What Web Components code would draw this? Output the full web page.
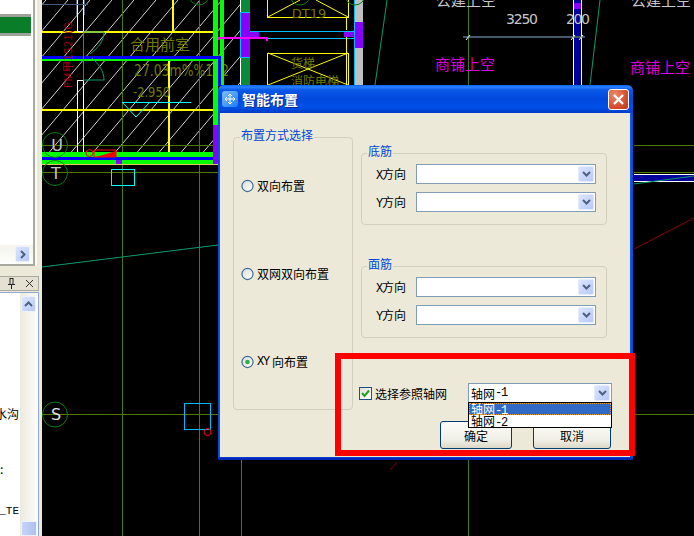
<!DOCTYPE html>
<html lang="en">

<head>
  <meta charset="UTF-8">
  <title>智能布置</title>
  <style>
    html,
    body {
      margin: 0;
      height: 100%;
      background: #000;
      overflow: hidden;
    }

    body {
      font: 12px "Noto Sans CJK SC", sans-serif;
      color: #000;
    }

    /* latin letters of the old bitmap font are 6px wide */
    .l {
      font: 12px "Liberation Mono", monospace;
      letter-spacing: -1.2px;
    }

    #desktop {
      position: relative;
      display: flex;
      width: 694px;
      height: 536px;
    }
  </style>
</head>

<body>
  <div id="desktop">
    <side-panels></side-panels>
    <cad-view></cad-view>

    <smart-dialog caption="智能布置">
      <group-box label="布置方式选择" class="modes">
        <radio-opt>双向布置</radio-opt>
        <radio-opt>双网双向布置</radio-opt>
        <radio-opt checked><span class="l">XY</span>向布置</radio-opt>
      </group-box>

      <group-box label="底筋" class="bars">
        <combo-field><span class="l">X</span>方向</combo-field>
        <combo-field><span class="l">Y</span>方向</combo-field>
      </group-box>

      <group-box label="面筋" class="bars">
        <combo-field><span class="l">X</span>方向</combo-field>
        <combo-field><span class="l">Y</span>方向</combo-field>
      </group-box>

      <check-opt slot="refer" checked>选择参照轴网</check-opt>
      <combo-box slot="refer" open>
        轴网<span class="l">-1</span>
        <list-opt slot="list" selected>轴网<span class="l">-1</span></list-opt>
        <list-opt slot="list">轴网<span class="l">-2</span></list-opt>
      </combo-box>

      <push-btn slot="actions" style="width:72px">确定</push-btn>
      <push-btn slot="actions" style="width:78px">取消</push-btn>
    </smart-dialog>
  </div>

  <script>
    const CHEVRON = `<svg width="9" height="6" viewBox="0 0 9 6"><path d="M1 1l3.5 3.5L8 1" fill="none" stroke="#4d6185" stroke-width="2"/></svg>`;
    const CHEVRON_UP = `<svg width="9" height="6" viewBox="0 0 9 6"><path d="M1 5l3.5-3.5L8 5" fill="none" stroke="#4d6185" stroke-width="2"/></svg>`;

    // the two docked tool windows left of the drawing
    class SidePanels extends HTMLElement {
      constructor() {
        super();
        this.attachShadow({ mode: 'open' });
        this.shadowRoot.innerHTML = `
          <style>
            :host {
              display: flex;
              flex-direction: column;
              flex: none;
              width: 42px;
              height: 536px;
              background: #ece9d8;
            }
            .top {
              position: relative;
              box-sizing: border-box;
              width: 35px;
              height: 266px;
              background: #fff;
              border-right: 2px solid #a9a9a0;
              border-bottom: 2px solid #a9a9a0;
              box-shadow: 2px 0 0 #fbfaf5;
              padding-top: 14px;
            }
            .bar {
              width: 31px;
              height: 16px;
              background: #0a7d28;
              border-top: 3px solid #a0a09a;
              border-bottom: 3px solid #a0a09a;
            }
            .hscroll {
              position: absolute;
              left: 0;
              right: 0;
              bottom: 1px;
              height: 18px;
              padding-right: 3px;
              background: linear-gradient(#f4f3ec, #fdfdfb);
              display: flex;
              justify-content: flex-end;
            }
            .arrow {
              box-sizing: border-box;
              width: 15px;
              height: 16px;
              margin: 1px 0;
              background: linear-gradient(135deg, #dbe5fd, #b7c9f6);
              border: 1px solid #eef2fe;
              border-radius: 2px;
              display: flex;
              align-items: center;
              justify-content: center;
            }
            .head {
              box-sizing: border-box;
              margin-top: 10px;
              width: 39px;
              height: 15px;
              background: #e4e1d2;
              border: 1px solid #a9a9a0;
              border-left: 0;
              display: flex;
              justify-content: flex-end;
              align-items: center;
              gap: 9px;
              padding-right: 4px;
            }
            .list {
              box-sizing: border-box;
              flex: 1;
              margin-top: 1px;
              width: 39px;
              display: flex;
              background: #fff;
              border-right: 1px solid #8fa9cf;
              border-top: 1px solid #8fa9cf;
              overflow: hidden;
            }
            .rows {
              position: relative;
              width: 20px;
              flex: none;
              overflow: hidden;
              white-space: nowrap;
            }
            .rows span {
              position: absolute;
              right: 1px;
              line-height: 14px;
            }
            .rows .mono {
              font: 11px "Liberation Mono", monospace;
            }
            .rows .colon {
              left: 0;
              right: auto;
            }
            .vscroll {
              flex: 1;
              display: flex;
              flex-direction: column;
              justify-content: space-between;
              background: linear-gradient(90deg, #ece9dd, #fdfdfb);
              padding: 2px 1px 0 1px;
            }
            .thumb {
              height: 15px;
              background: linear-gradient(90deg, #c6d4fa, #aebff0);
              border: 1px solid #eef2fe;
              box-sizing: border-box;
            }
          </style>
          <div class="top">
            <div class="bar"></div>
            <div class="hscroll">
              <div class="arrow"><svg width="6" height="9" viewBox="0 0 6 9"><path d="M1 1l3.5 3.5L1 8" fill="none" stroke="#4d6185" stroke-width="2"/></svg></div>
            </div>
          </div>
          <div class="head">
            <svg width="9" height="11" viewBox="0 0 9 11"><path d="M2.500 .5h4M3 1v5M6 1v5M1 6.500h7M4.500 7v4" fill="none" stroke="#222"/></svg>
            <svg width="9" height="9" viewBox="0 0 9 9"><path d="M1 1l7 7M8 1L1 8" stroke="#333"/></svg>
          </div>
          <div class="list">
            <div class="rows">
              <span style="top:114px">水沟</span>
              <span class="colon" style="top:169px">:</span>
              <span class="mono" style="top:212px">_TE</span>
            </div>
            <div class="vscroll">
              <div class="arrow">${CHEVRON_UP}</div>
              <div class="thumb"></div>
            </div>
          </div>
        `;
      }
    }

    // the drawing itself: free canvas, viewBox keeps page coordinates
    class CadView extends HTMLElement {
      constructor() {
        super();
        this.attachShadow({ mode: 'open' });
        this.shadowRoot.innerHTML = `
          <style>
            :host {
              display: block;
              flex: 1;
              height: 536px;
              background: #000;
            }
            svg {
              display: block;
            }
            text {
              font-family: "Noto Sans CJK SC", sans-serif;
            }
            text.num {
              font-family: "DejaVu Sans", sans-serif;
            }
          </style>
          <svg width="652" height="536" viewBox="42 0 652 536">
            <defs>
              <pattern id="hatch" x="2" width="22" height="26" patternUnits="userSpaceOnUse">
                <path d="M-1 27.200L23 -1.200" stroke="#d0d0d0" stroke-width="1"/>
              </pattern>
            </defs>
            <path d="M42 0H240V85H218V153H42Z" fill="url(#hatch)"/>

            <!-- sits under the green band, which hides one digit -->
            <text x="134" y="76" font-size="15" fill="#707a00" class="num" textLength="95" lengthAdjust="spacingAndGlyphs">27.03m%%152</text>

            <g shape-rendering="crispEdges">
              <!-- grid axes -->
              <path d="M122.500 0V536M199.500 0V536M241.500 460V536M468.500 0V85M468.500 458V536M42 145.500H218M42 172.500H218M42 414.500H218M634 145.500H694M634 172.500H694M634 414.500H694" stroke="#4a7a00" fill="none"/>

              <!-- yellow walls -->
              <rect x="42" y="31" width="176" height="2" fill="#ff0"/>
              <rect x="42" y="109" width="172" height="2" fill="#ff0"/>
              <rect x="172" y="0" width="2" height="33" fill="#ff0"/>
              <rect x="168" y="60" width="2" height="97" fill="#ff0"/>
              <rect x="42" y="164" width="176" height="1" fill="#e8c860"/>

              <!-- white door jambs -->
              <rect x="77" y="0" width="1" height="32" fill="#fff"/>
              <rect x="83" y="0" width="1" height="32" fill="#fff"/>
              <rect x="77" y="80" width="1" height="77" fill="#fff"/>
              <rect x="83" y="80" width="1" height="77" fill="#fff"/>
              <rect x="78" y="80" width="5" height="1" fill="#fff"/>
              <rect x="78" y="31" width="5" height="1" fill="#fff"/>

              <!-- bright green and blue bands -->
              <rect x="213" y="0" width="5" height="153" fill="#0f0"/>
              <rect x="220" y="0" width="4" height="85" fill="#0f0"/>
              <rect x="42" y="152" width="176" height="5" fill="#0f0"/>
              <rect x="42" y="160" width="176" height="4" fill="#0f0"/>
              <rect x="42" y="59" width="176" height="2" fill="#0f0"/>
              <rect x="42" y="56" width="179" height="3" fill="#00f"/>
              <rect x="218" y="56" width="3" height="30" fill="#00f"/>
              <rect x="42" y="157" width="176" height="3" fill="#00f"/>
              <rect x="213" y="125" width="5" height="39" fill="#80f"/>
              <rect x="116" y="160" width="6" height="4" fill="#80f"/>

              <!-- stair column at top centre -->
              <rect x="241" y="0" width="9" height="85" fill="#0a8a3a"/>
              <rect x="241" y="13" width="9" height="44" fill="#80f"/>
              <rect x="240" y="0" width="1" height="85" fill="#fff"/>
              <rect x="240" y="12" width="10" height="1" fill="#0bf"/>
              <rect x="240" y="57" width="10" height="1" fill="#0bf"/>
              <rect x="240" y="12" width="1" height="46" fill="#0bf"/>
              <rect x="250" y="31" width="104" height="1" fill="#0bf"/>
              <rect x="250" y="38" width="104" height="1" fill="#0bf"/>
              <rect x="250" y="32" width="9" height="5" fill="#80f"/>
              <rect x="344" y="32" width="10" height="5" fill="#80f"/>
              <rect x="218" y="37" width="50" height="2" fill="#f0f"/>
              <rect x="266" y="39" width="2" height="2" fill="#f0f"/>
              <rect x="218" y="37" width="2" height="3" fill="#f0f"/>

              <!-- grey column -->
              <rect x="355" y="0" width="8" height="85" fill="#c0c0c0"/>
              <rect x="355" y="22" width="8" height="26" fill="#80f"/>
              <rect x="354" y="0" width="1" height="85" fill="#0bf"/>

              <!-- lift shafts -->
              <path d="M267.500 0V17.500H348.500V0M267.500 85V53.500H348.500V85M346.500 18V30M346.500 37V85" fill="none" stroke="#ff0"/>

              <!-- right side column and beam -->
              <rect x="574" y="0" width="7" height="85" fill="#00009a"/>
              <rect x="573" y="0" width="1" height="85" fill="#fff"/>
              <rect x="581" y="0" width="1" height="85" fill="#fff"/>
              <rect x="574" y="3" width="7" height="6" fill="#80f"/>
              <rect x="634" y="175" width="60" height="6" fill="#00009a"/>
              <rect x="634" y="174" width="60" height="1" fill="#fff"/>
              <rect x="634" y="181" width="60" height="1" fill="#fff"/>

              <!-- dimension line -->
              <rect x="463" y="36" width="122" height="2" fill="#445a6a"/>

              <!-- cyan boxes -->
              <rect x="111.500" y="169.500" width="23" height="16" fill="none" stroke="#0ff"/>
              <rect x="184.500" y="403.500" width="26" height="26" fill="none" stroke="#0bf"/>
              <path d="M122 102.500H191" stroke="#0ff"/>
              <path d="M42 4.500H88" stroke="#445a78"/>
              <path d="M76.500 0V15M84.500 0V15" stroke="#445a78"/>
            </g>

            <!-- dimension ticks -->
            <path d="M466 40l4-5M571 40l4-5M579 40l4-5" stroke="#fff"/>

            <!-- slanted lines -->
            <path d="M42 267L218 245M634 184L694 176M387 0L375 85M600 0L590 85" stroke="#0a9a70" fill="none"/>
            <path d="M634 249L694 218M397 462L390 470" stroke="#8a0010" fill="none"/>

            <!-- shaft crosses -->
            <path d="M268 17L300 0M348 17L316 0M268 53L348 85M348 53L268 85" stroke="#ff0" fill="none"/>

            <!-- door swings -->
            <path d="M83 32H104C104 41 98 48 90 54M83 80H104C104 70 98 64 92 58M83.500 32V80" stroke="#0a9a70" fill="none"/>

            <!-- cyan level mark -->
            <path d="M122 102L136 117L150 102" stroke="#0ff" fill="none"/>

            <!-- axis bubbles -->
            <g fill="none" stroke="#0a7d10">
              <circle cx="55" cy="145" r="12.500"/>
              <circle cx="55" cy="173" r="12.500"/>
              <circle cx="55" cy="414.500" r="12.500"/>
              <circle cx="199" cy="-5" r="10"/>
              <circle cx="300" cy="-5" r="10"/>
              <circle cx="355" cy="-5" r="10"/>
            </g>
            <text x="57" y="151" text-anchor="middle" font-size="16" fill="#c8c8c8" class="num">U</text>
            <text x="56" y="179" text-anchor="middle" font-size="16" fill="#c8c8c8" class="num">T</text>
            <text x="56" y="420" text-anchor="middle" font-size="16" fill="#e0e0e0" class="num">S</text>

            <!-- red marks -->
            <circle cx="89.500" cy="153" r="3.500" fill="none" stroke="#f00"/>
            <path d="M94 150H116V157H94Z" fill="none" stroke="#f00"/>
            <path d="M96 157L116 151V157Z" fill="#f00"/>
            <circle cx="207.500" cy="432" r="3.500" fill="none" stroke="#f00"/>

            <!-- olive texts -->
            <text x="130" y="50" font-size="15" fill="#707a00">合用前室</text>
            <text x="133" y="97" font-size="14" fill="#707a00" class="num" textLength="37" lengthAdjust="spacingAndGlyphs">-2.950</text>
            <text x="309" y="18" font-size="13" fill="#707a00" text-anchor="middle" class="num">DT19</text>
            <text x="303" y="68" font-size="12" fill="#707a00" text-anchor="middle">货梯</text>
            <text x="315" y="86" font-size="12" fill="#707a00" text-anchor="middle">消防电梯</text>
            <text transform="translate(72 88) rotate(-90)" font-size="11" fill="#a00010" textLength="66">FM甲1521(G</text>

            <!-- white texts -->
            <text x="436" y="6" font-size="15" fill="#c8c8c8">公建上空</text>
            <text x="631" y="6" font-size="15" fill="#c8c8c8">公建上空</text>
            <text x="506" y="24" font-size="14" fill="#c8c8c8" class="num" textLength="32">3250</text>
            <text x="566" y="24" font-size="14" fill="#c8c8c8" class="num" textLength="24">200</text>

            <!-- magenta texts -->
            <text x="435" y="70" font-size="15" fill="#d800d8">商铺上空</text>
            <text x="630" y="73" font-size="15" fill="#d800d8">商铺上空</text>
          </svg>
        `;
      }
    }

    // XP style window floating over the drawing
    class SmartDialog extends HTMLElement {
      constructor() {
        super();
        this.attachShadow({ mode: 'open' });
        this.shadowRoot.innerHTML = `
          <style>
            :host {
              position: absolute;
              left: 218px;
              top: 85px;
              width: 415px;
              height: 375px;
              display: flex;
              flex-direction: column;
              box-sizing: border-box;
              border-radius: 6px 6px 0 0;
              background: linear-gradient(90deg, #0a46e0 0, #0a5af0 2px, #0a5af0 calc(100% - 2px), #0a46d0 100%);
              padding: 0 3px 3px 2px;
              box-shadow: inset 0 -2px 0 #0028b0, inset 0 -3px 0 #0a3cd0;
            }
            .title {
              flex: none;
              display: flex;
              align-items: center;
              height: 28px;
              margin: 0 -3px 0 -2px;
              padding: 0 4px;
              border-radius: 6px 6px 0 0;
              background: linear-gradient(#0a62f0 0, #2a80ff 2px, #0a58e8 5px, #0048dc 14px, #0050e8 22px, #003cc8 28px);
            }
            .logo {
              width: 16px;
              height: 16px;
              margin-top: -1px;
              border-radius: 3px;
              background: linear-gradient(135deg, #7cc0ff, #1c7cf0);
            }
            .caption {
              margin-left: 4px;
              font: bold 14px "Noto Sans CJK SC", sans-serif;
              color: #fff;
              text-shadow: 1px 1px 0 #0a2a90;
            }
            .close {
              margin-left: auto;
              box-sizing: border-box;
              width: 21px;
              height: 21px;
              border: 1px solid #fff;
              border-radius: 3px;
              background: radial-gradient(circle at 30% 25%, #ec8a6c, #d6502e 60%, #b83a1c);
              display: flex;
              align-items: center;
              justify-content: center;
            }
            .client {
              position: relative;
              flex: 1;
              background: #ece9d8;
              display: flex;
              gap: 8px;
              padding: 24px 0 0 13px;
              min-height: 0;
            }
            .right {
              display: flex;
              flex-direction: column;
              gap: 41px;
              padding-top: 16px;
              width: 246px;
              position: relative;
            }
            .refer {
              display: flex;
              align-items: center;
              gap: 21px;
              margin: 4px 0 0 -2px;
            }
            .actions {
              display: flex;
              gap: 21px;
              margin: -23px 0 0 79px;
            }
            .mark {
              position: absolute;
              left: 115px;
              top: 240px;
              width: 300px;
              height: 103px;
              box-sizing: border-box;
              border: 6px solid #f00;
              pointer-events: none;
            }
            ::slotted(combo-box) {
              width: 144px;
            }
          </style>
          <div class="title">
            <div class="logo">
              <svg width="16" height="16" viewBox="0 0 16 16"><path d="M8 3v10M3 8h10M6 5l2-2 2 2M6 11l2 2 2-2M5 6L3 8l2 2M11 6l2 2-2 2" fill="none" stroke="#fff"/></svg>
            </div>
            <div class="caption"></div>
            <div class="close">
              <svg width="13" height="13" viewBox="0 0 13 13"><path d="M2 2l9 9M11 2l-9 9" stroke="#fff" stroke-width="2.400"/></svg>
            </div>
          </div>
          <div class="client">
            <slot name="modes"></slot>
            <div class="right">
              <slot></slot>
              <div class="refer"><slot name="refer"></slot></div>
              <div class="actions"><slot name="actions"></slot></div>
            </div>
            <div class="mark"></div>
          </div>
        `;
        this.shadowRoot.querySelector('.caption').textContent = this.getAttribute('caption');
        // first group box is the left column
        this.querySelector('group-box.modes').slot = 'modes';
      }
    }

    class GroupBox extends HTMLElement {
      constructor() {
        super();
        this.attachShadow({ mode: 'open' });
        this.shadowRoot.innerHTML = `
          <style>
            :host {
              position: relative;
              display: flex;
              flex-direction: column;
              flex: none;
              box-sizing: border-box;
              border: 1px solid #d0d0bf;
              border-radius: 4px;
            }
            :host(.modes) {
              width: 120px;
              height: 273px;
              padding: 41px 0 0 7px;
              gap: 74px;
            }
            :host(.bars) {
              width: 246px;
              height: 72px;
              padding: 10px 0 0 14px;
              gap: 8px;
            }
            .legend {
              position: absolute;
              left: 6px;
              top: -11px;
              padding: 0 1px;
              line-height: 16px;
              background: linear-gradient(transparent 7px, #ece9d8 7px);
              color: #0046d5;
            }
            :host(.bars) .legend {
              left: 5px;
            }
          </style>
          <div class="legend"></div>
          <slot></slot>
        `;
        this.shadowRoot.querySelector('.legend').textContent = this.getAttribute('label');
      }
    }

    class RadioOpt extends HTMLElement {
      constructor() {
        super();
        this.attachShadow({ mode: 'open' });
        const dot = this.hasAttribute('checked') ? '<circle cx="7" cy="7" r="2.500" fill="#2fb040"/>' : '';
        this.shadowRoot.innerHTML = `
          <style>
            :host {
              display: flex;
              align-items: center;
              gap: 3px;
              height: 14px;
              line-height: 14px;
              white-space: nowrap;
            }
            svg {
              flex: none;
            }
          </style>
          <svg width="13" height="14" viewBox="0 0 14 14">
            <defs>
              <linearGradient id="r" x1="0" y1="0" x2="1" y2="1">
                <stop offset="0" stop-color="#dcdcd6"/>
                <stop offset="1" stop-color="#fff"/>
              </linearGradient>
            </defs>
            <circle cx="7" cy="7" r="6" fill="url(#r)" stroke="#3c6a96" stroke-width="1.300"/>
            ${dot}
          </svg>
          <slot></slot>
        `;
      }
    }

    class CheckOpt extends HTMLElement {
      constructor() {
        super();
        this.attachShadow({ mode: 'open' });
        this.shadowRoot.innerHTML = `
          <style>
            :host {
              display: flex;
              align-items: center;
              gap: 3px;
              width: 88px;
              flex: none;
              white-space: nowrap;
            }
            .box {
              flex: none;
              box-sizing: border-box;
              width: 13px;
              height: 13px;
              border: 1px solid #1c5180;
              background: linear-gradient(135deg, #e0e0d8, #fff);
            }
            svg {
              display: block;
            }
          </style>
          <div class="box"><svg width="11" height="11" viewBox="0 0 11 11"><path d="M2 5l2.500 3L9 2.500" fill="none" stroke="#21a121" stroke-width="2"/></svg></div>
          <slot></slot>
        `;
      }
    }

    class ComboField extends HTMLElement {
      constructor() {
        super();
        this.attachShadow({ mode: 'open' });
        this.shadowRoot.innerHTML = `
          <style>
            :host {
              display: flex;
              align-items: center;
            }
            .lab {
              width: 40px;
              flex: none;
              white-space: nowrap;
            }
            combo-box {
              width: 180px;
            }
          </style>
          <div class="lab"><slot></slot></div>
          <combo-box></combo-box>
        `;
      }
    }

    class ComboBox extends HTMLElement {
      constructor() {
        super();
        this.attachShadow({ mode: 'open' });
        this.shadowRoot.innerHTML = `
          <style>
            :host {
              position: relative;
              display: flex;
              flex: none;
              box-sizing: border-box;
              height: 20px;
              align-items: center;
              background: #fff;
              border: 1px solid #7f9db9;
              padding-left: 2px;
              white-space: nowrap;
            }
            .btn {
              box-sizing: border-box;
              margin: 0 1px 0 auto;
              width: 16px;
              height: 16px;
              background: linear-gradient(135deg, #dbe5fd, #b7c9f6);
              border: 1px solid #e4ebfd;
              border-radius: 2px;
              display: flex;
              align-items: center;
              justify-content: center;
            }
            .drop {
              position: absolute;
              left: -1px;
              right: -1px;
              top: 18px;
              box-sizing: border-box;
              background: #fff;
              border: 1px solid #000;
              z-index: 2;
            }
            :host(:not([open])) .drop {
              display: none;
            }
          </style>
          <slot></slot>
          <div class="btn">${CHEVRON}</div>
          <div class="drop"><slot name="list"></slot></div>
        `;
      }
    }

    class ListOpt extends HTMLElement {
      constructor() {
        super();
        this.attachShadow({ mode: 'open' });
        this.shadowRoot.innerHTML = `
          <style>
            :host {
              display: block;
              box-sizing: border-box;
              height: 12px;
              line-height: 12px;
              padding-left: 2px;
              white-space: nowrap;
            }
            :host([selected]) {
              background: #316ac5;
              color: #fff;
              outline: 1px dotted #e0a040;
              outline-offset: -1px;
            }
          </style>
          <slot></slot>
        `;
      }
    }

    class PushBtn extends HTMLElement {
      constructor() {
        super();
        this.attachShadow({ mode: 'open' });
        this.shadowRoot.innerHTML = `
          <style>
            :host {
              display: flex;
              flex: none;
              align-items: center;
              justify-content: center;
              box-sizing: border-box;
              height: 28px;
              border: 1px solid #003c74;
              border-radius: 3px;
              background: linear-gradient(#fcfcf8, #f0efe6 70%, #dcd8c8);
            }
          </style>
          <slot></slot>
        `;
      }
    }

    customElements.define('side-panels', SidePanels);
    customElements.define('cad-view', CadView);
    customElements.define('group-box', GroupBox);
    customElements.define('radio-opt', RadioOpt);
    customElements.define('check-opt', CheckOpt);
    customElements.define('combo-box', ComboBox);
    customElements.define('combo-field', ComboField);
    customElements.define('list-opt', ListOpt);
    customElements.define('push-btn', PushBtn);
    customElements.define('smart-dialog', SmartDialog);
  </script>
</body>

</html>
